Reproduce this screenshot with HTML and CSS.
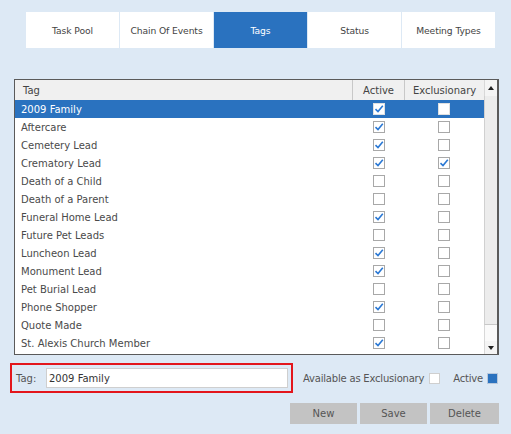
FILE: index.html
```html
<!DOCTYPE html>
<html lang="en">
<head>
    <meta charset="UTF-8">
    <title>Tags</title>
    <link rel="stylesheet" href="styles.css">
</head>
<body>
    <div class="tabs">
        <div class="tab">Task Pool</div>
        <div class="tab">Chain Of Events</div>
        <div class="tab active">Tags</div>
        <div class="tab">Status</div>
        <div class="tab">Meeting Types</div>
    </div>

    <div class="grid-box">
        <div class="grid">
            <div class="row header">
                <div class="cell name">Tag</div>
                <div class="cell col-active">Active</div>
                <div class="cell col-excl">Exclusionary</div>
            </div>
            <div class="rows" id="rows"></div>
        </div>
        <div class="scrollbar">
            <div class="sb-btn top"><span class="arrow up"></span></div>
            <div class="sb-thumb"></div>
            <div class="sb-track"></div>
            <div class="sb-btn"><span class="arrow down"></span></div>
        </div>
    </div>

    <div class="form-row">
        <div class="tag-field">
            <label>Tag:</label>
            <input type="text" value="2009 Family">
        </div>
        <div class="flags">
            <span>Available as Exclusionary</span>
            <span class="box"></span>
            <span class="flag-label">Active</span>
            <span class="box filled"></span>
        </div>
    </div>

    <div class="buttons">
        <button>New</button>
        <button>Save</button>
        <button>Delete</button>
    </div>

    <script>
        const tags = [
            ['2009 Family', true, false],
            ['Aftercare', true, false],
            ['Cemetery Lead', true, false],
            ['Crematory Lead', true, true],
            ['Death of a Child', false, false],
            ['Death of a Parent', false, false],
            ['Funeral Home Lead', true, false],
            ['Future Pet Leads', false, false],
            ['Luncheon Lead', true, false],
            ['Monument Lead', true, false],
            ['Pet Burial Lead', false, false],
            ['Phone Shopper', true, false],
            ['Quote Made', false, false],
            ['St. Alexis Church Member', true, false]
        ];

        const tick = '<svg width="10" height="10" viewBox="0 0 10 10"><path d="M1.5 5.2 L4 7.6 L8.8 1.8" fill="none" stroke="#2a78d4" stroke-width="1.6"/></svg>';

        function checkbox(on) {
            return '<span class="check">' + (on ? tick : '') + '</span>';
        }

        const rows = document.getElementById('rows');
        tags.forEach((t, i) => {
            const row = document.createElement('div');
            row.className = 'row' + (i === 0 ? ' selected' : '');
            row.innerHTML =
                '<div class="cell name">' + t[0] + '</div>' +
                '<div class="cell col-active">' + checkbox(t[1]) + '</div>' +
                '<div class="cell col-excl">' + checkbox(t[2]) + '</div>';
            rows.appendChild(row);
        });
    </script>
</body>
</html>
```

FILE: styles.css
```css
body {
    margin: 0;
    background-color: #dde9f5;
    font-family: "DejaVu Sans", sans-serif;
    font-size: 10px;
    color: #4a4a4a;
}
.tabs {
    display: flex;
    gap: 1px;
    padding: 12px 0 0 26px;
}
.tab {
    width: 93px;
    height: 36px;
    background-color: white;
    display: flex;
    align-items: center;
    justify-content: center;
    font-size: 9.2px;
    letter-spacing: -0.1px;
    color: #444;
}
.tab.active {
    background-color: #2a72bf;
    color: white;
}
.grid-box {
    margin: 31px 0 0 14px;
    width: 483px;
    height: 274px;
    border: 1px solid #5a5a5a;
    background-color: white;
    display: flex;
}
.grid {
    width: 470px;
}
.row {
    display: flex;
    height: 18px;
    align-items: center;
}
.row.header {
    height: 20px;
    background-color: #f0f0f0;
    color: #444;
}
.row.selected {
    background-color: #2a72bf;
    color: white;
}
.cell {
    height: 100%;
    display: flex;
    align-items: center;
}
.cell.name {
    flex: 1;
    padding-left: 6px;
}
.header .cell.name {
    padding-left: 8px;
}
.col-active {
    width: 52px;
    justify-content: center;
}
.col-excl {
    width: 80px;
    justify-content: center;
}
.header .col-active,
.header .col-excl {
    border-left: 1px solid #c8c8c8;
    box-sizing: border-box;
}
.check {
    width: 10px;
    height: 10px;
    border: 1px solid #a8a8a8;
    background-color: white;
    display: flex;
    align-items: center;
    justify-content: center;
}
.selected .check {
    border-color: #e0e0e0;
}
.col-active .check {
    margin-left: 2px;
}
.scrollbar {
    width: 13px;
    display: flex;
    flex-direction: column;
    border-right: 1px solid #5a5a5a;
}
.sb-btn {
    height: 13px;
    background-color: #f4f4f4;
    border-left: 1px solid #d8d8d8;
    display: flex;
    align-items: center;
    justify-content: center;
}
.sb-btn.top {
    height: 16px;
}
.sb-thumb {
    height: 228px;
    background-color: #ececec;
    border-left: 1px solid #d0d0d0;
    border-bottom: 1px solid #c8c8c8;
}
.sb-track {
    flex: 1;
    background-color: #fafafa;
    border-left: 1px solid #d8d8d8;
}
.arrow {
    width: 0;
    height: 0;
    border-left: 3px solid transparent;
    border-right: 3px solid transparent;
}
.arrow.up {
    border-bottom: 4px solid #222;
}
.arrow.down {
    border-top: 4px solid #222;
}
.form-row {
    display: flex;
    align-items: center;
    margin: 8px 13px 0 10px;
}
.tag-field {
    width: 279px;
    height: 26px;
    border: 2px solid #e3161c;
    display: flex;
    align-items: center;
}
.tag-field label {
    width: 34px;
    padding-left: 4px;
    box-sizing: border-box;
    color: #555;
}
.tag-field input {
    width: 242px;
    height: 20px;
    box-sizing: border-box;
    border: 1px solid #cfcfcf;
    padding: 0 2px;
    font-family: "DejaVu Sans", sans-serif;
    font-size: 10px;
    color: #333;
    outline: none;
}
.flags {
    flex: 1;
    display: flex;
    align-items: center;
    justify-content: flex-end;
    color: #555;
    font-size: 10px;
    letter-spacing: -0.2px;
    white-space: nowrap;
}
.box {
    width: 9px;
    height: 9px;
    border: 1px solid #cfcfcf;
    background-color: white;
    margin-left: 5px;
}
.box.filled {
    background-color: #2a72bf;
    border-color: #b8c8dc;
    margin-left: 4px;
}
.flag-label {
    margin-left: 13px;
}
.buttons {
    display: flex;
    gap: 3px;
    margin: 10px 0 0 290px;
}
.buttons button {
    height: 21px;
    width: 67px;
    border: none;
    background-color: #c3c3c3;
    color: #555;
    font-family: "DejaVu Sans", sans-serif;
    font-size: 10px;
    padding: 0;
}
.buttons button:last-child {
    width: 69px;
}
```
